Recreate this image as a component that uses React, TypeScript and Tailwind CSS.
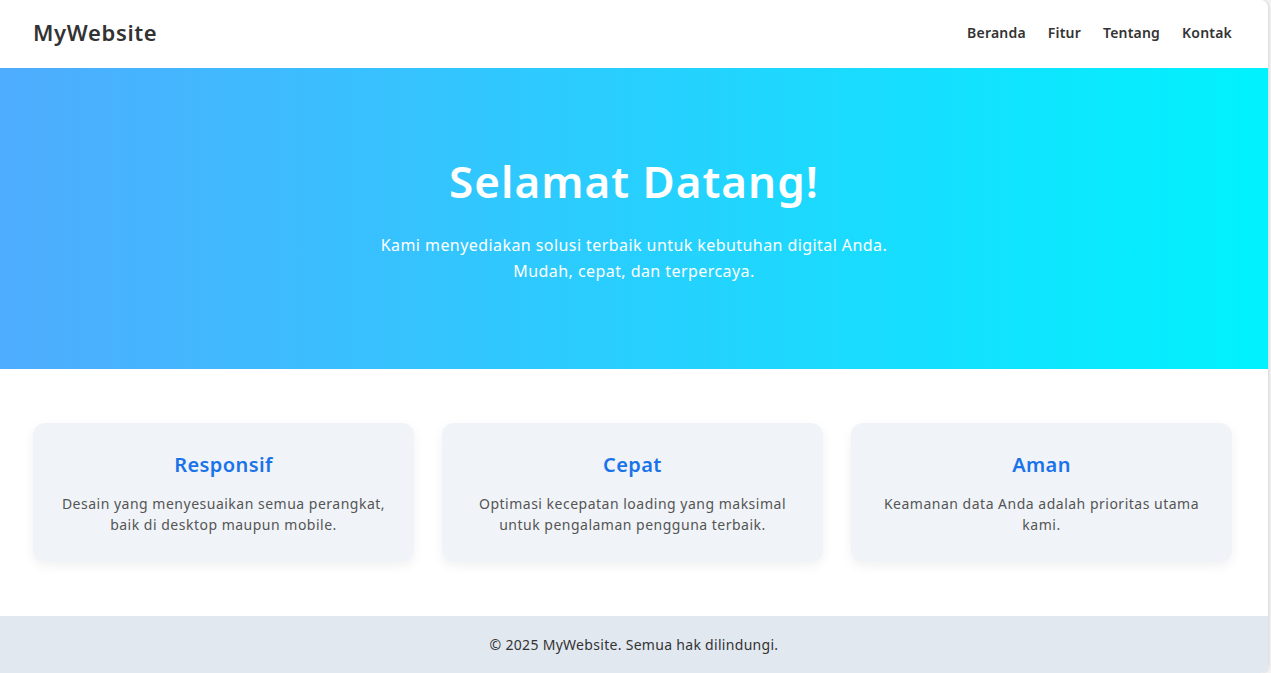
import React from 'react';

const features = [
  {
    title: 'Responsif',
    text: 'Desain yang menyesuaikan semua perangkat, baik di desktop maupun mobile.',
  },
  {
    title: 'Cepat',
    text: 'Optimasi kecepatan loading yang maksimal untuk pengalaman pengguna terbaik.',
  },
  {
    title: 'Aman',
    text: 'Keamanan data Anda adalah prioritas utama kami.',
  },
];

const navLinks = ['Beranda', 'Fitur', 'Tentang', 'Kontak'];

const App: React.FC = () => {
  return (
    <div className="w-[1271px] h-[673px] bg-[#f3f3f3] overflow-hidden font-['Noto_Sans',sans-serif]">
      <div className="w-[1268px] h-[673px] bg-white rounded-r-lg overflow-hidden shadow-[1px_0_3px_rgba(0,0,0,0.12)] flex flex-col">
        {/* Navbar */}
        <header className="h-[68px] flex items-center justify-between pl-[33px] pr-[36px] pb-[4px] bg-white">
          <div className="text-[22px] font-semibold text-[#333] tracking-[0.65px]">MyWebsite</div>
          <nav className="flex items-center gap-[22px]">
            {navLinks.map((link) => (
              <a key={link} href="#" className="text-[14px] font-semibold text-[#333] tracking-[0.2px]">
                {link}
              </a>
            ))}
          </nav>
        </header>

        {/* Hero */}
        <section className="h-[301px] bg-[linear-gradient(to_right,#4facfe,#00f2fe)] flex flex-col items-center justify-center text-white text-center">
          <h1 className="text-[44px] font-semibold leading-tight mb-[23px] tracking-[1px]">Selamat Datang!</h1>
          <p className="text-[16px] leading-[26px] tracking-[0.43px]">
            Kami menyediakan solusi terbaik untuk kebutuhan digital Anda.
            <br />
            Mudah, cepat, dan terpercaya.
          </p>
        </section>

        {/* Features */}
        <section className="pl-[33px] pr-[36px] pt-[54px] pb-[54px] grid grid-cols-3 gap-[28px]">
          {features.map((f) => (
            <div
              key={f.title}
              className="h-[139px] bg-[#f0f4f8] rounded-xl shadow-[0_4px_12px_rgba(0,0,0,0.06)] flex flex-col items-center pt-[29px] px-[24px] text-center"
            >
              <h3 className="text-[20px] font-semibold text-[#1a73e8] leading-[26px] tracking-[0.4px]">{f.title}</h3>
              <p className="mt-[15px] text-[14px] leading-[21px] text-[#555] tracking-[0.5px]">{f.text}</p>
            </div>
          ))}
        </section>

        {/* Footer */}
        <footer className="flex-1 bg-[#e2e8f0] flex items-center justify-center pb-[1px]">
          <p className="text-[14px] text-[#333] tracking-[0.3px]">© 2025 MyWebsite. Semua hak dilindungi.</p>
        </footer>
      </div>
    </div>
  );
};

export default App;
